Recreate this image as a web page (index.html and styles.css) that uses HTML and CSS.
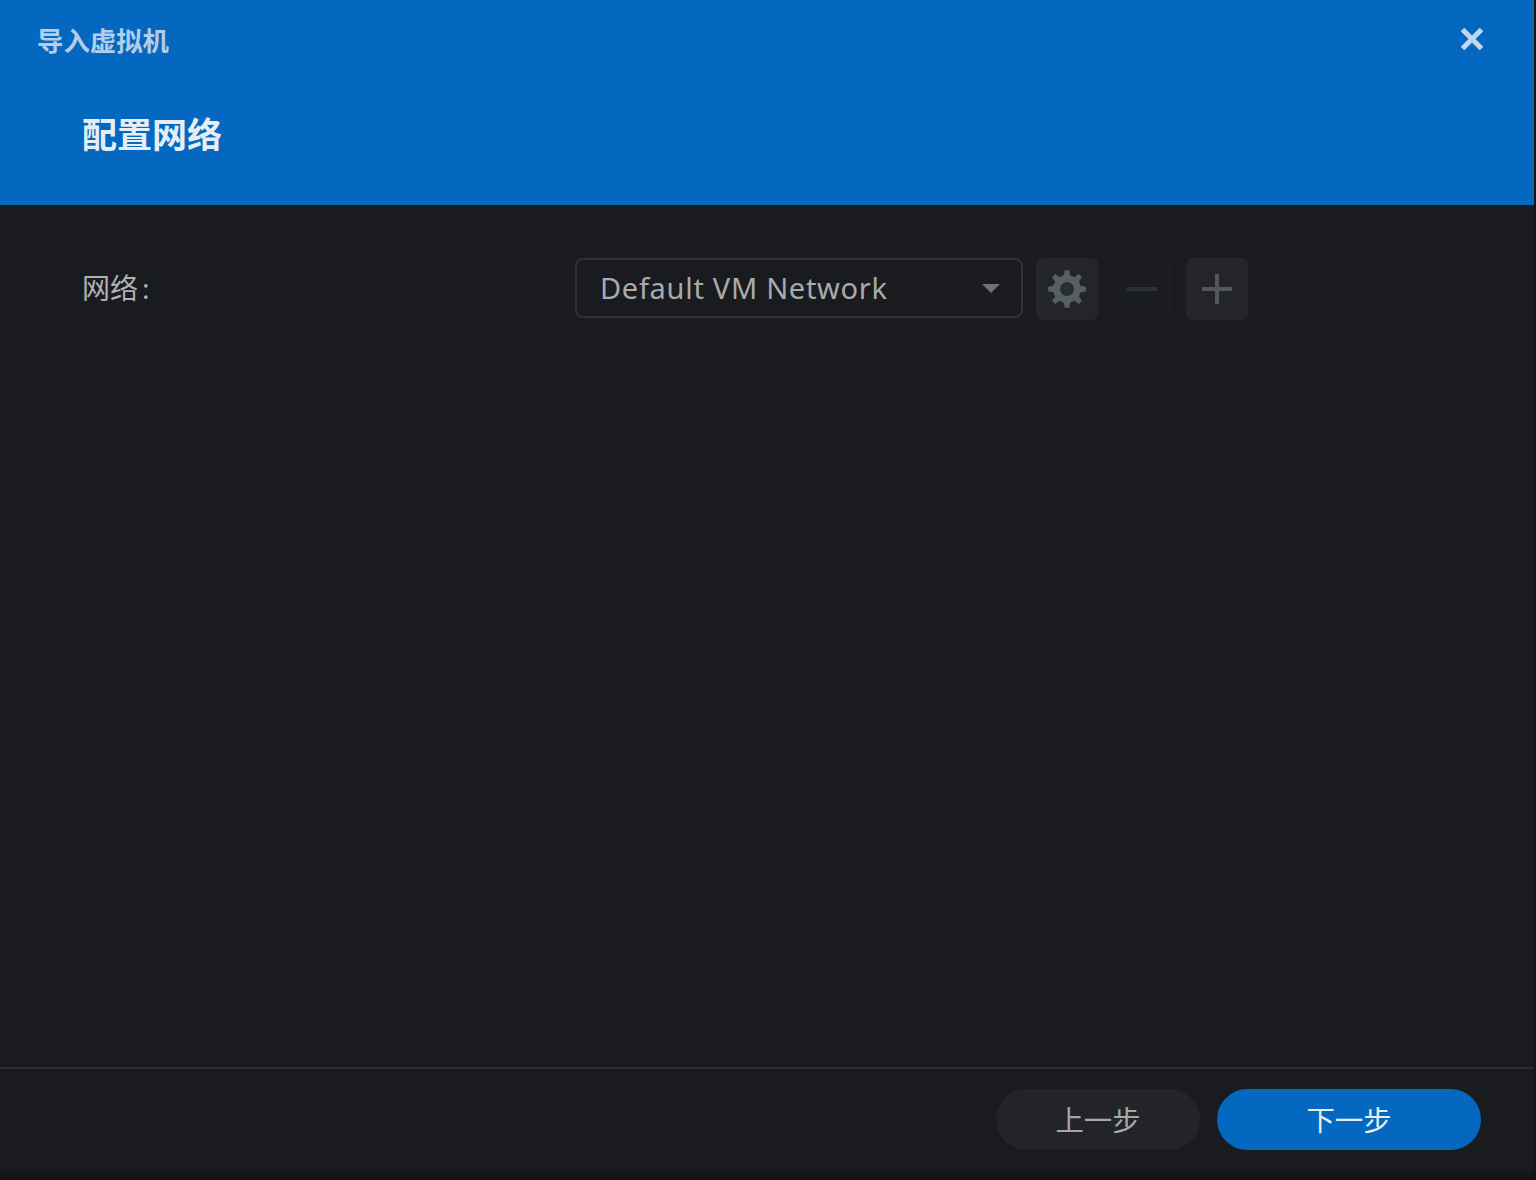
FILE: index.html
```html
<!DOCTYPE html>
<html lang="zh-CN">
<head>
    <meta charset="UTF-8">
    <meta name="viewport" content="width=device-width, initial-scale=1.0">
    <title>导入虚拟机</title>
    <link rel="stylesheet" href="styles.css">
</head>
<body>
    <div class="dialog">
        <!-- Header -->
        <header class="dialog-header">
            <div class="title-row">
                <span class="window-title">导入虚拟机</span>
                <button class="close-btn" type="button" aria-label="关闭">
                    <svg width="24" height="24" viewBox="0 0 24 24">
                        <path d="M2.500 2.500 L21.500 21.500 M21.500 2.500 L2.500 21.500" stroke="#c3d7ec" stroke-width="5" fill="none"/>
                    </svg>
                </button>
            </div>
            <h1 class="step-title">配置网络</h1>
        </header>

        <!-- Form -->
        <main class="dialog-body">
            <div class="form-row">
                <label class="form-label">网络<span class="label-colon">:</span></label>
                <div class="select-box">
                    <span class="select-value">Default VM Network</span>
                    <span class="select-arrow"></span>
                </div>
                <div class="tool-buttons">
                    <button class="tool-btn" type="button" aria-label="设置">
                        <svg width="40" height="40" viewBox="0 0 40 40">
                            <circle class="gear-hole" cx="20" cy="20" r="8"/>
                            <path class="gear" fill-rule="evenodd" d="M16.85 6.36L17.68 1.14H22.32L23.15 6.36L27.42 8.13L31.7 5.03L34.97 8.3L31.87 12.58L33.64 16.85L38.86 17.68V22.32L33.64 23.15L31.87 27.42L34.97 31.7L31.7 34.97L27.42 31.87L23.15 33.64L22.32 38.86H17.68L16.85 33.64L12.58 31.87L8.3 34.97L5.03 31.7L8.13 27.42L6.36 23.15L1.14 22.32V17.68L6.36 16.85L8.13 12.58L5.03 8.3L8.3 5.03L12.58 8.13Z M20 13a7 7 0 1 0 0 14a7 7 0 1 0 0-14z"/>
                        </svg>
                    </button>
                    <button class="tool-btn is-disabled" type="button" aria-label="删除">
                        <svg width="32" height="32" viewBox="0 0 32 32">
                            <path class="dim-line" d="M1 16H31"/>
                        </svg>
                    </button>
                    <button class="tool-btn" type="button" aria-label="添加">
                        <svg width="32" height="32" viewBox="0 0 32 32">
                            <path class="plus-line" d="M1 16H31M16 1V31"/>
                        </svg>
                    </button>
                </div>
            </div>
        </main>

        <!-- Footer -->
        <footer class="dialog-footer">
            <button class="btn btn-prev" type="button">上一步</button>
            <button class="btn btn-next" type="button">下一步</button>
        </footer>
    </div>
</body>
</html>
```

FILE: styles.css
```css
/* General Styles */
html, body {
    height: 100%;
}

body {
    margin: 0;
    padding: 0;
    background-color: #141518;
    font-family: "Noto Sans", "Noto Sans CJK SC", sans-serif;
}

button {
    font-family: inherit;
    border: none;
    padding: 0;
    cursor: pointer;
}

.dialog {
    height: 1172px;
    margin-right: 2px;
    display: flex;
    flex-direction: column;
    background-color: #1a1b1f;
}

/* Header */
.dialog-header {
    height: 205px;
    flex-shrink: 0;
    box-sizing: border-box;
    padding: 22px 50px 0 37px;
    background-color: #0568c0;
}

.title-row {
    display: flex;
    align-items: flex-start;
    justify-content: space-between;
}

.window-title {
    font-size: 26.4px;
    line-height: 38px;
    font-weight: 700;
    color: #b4cde6;
}

.close-btn {
    display: flex;
    margin-top: 5px;
    background: none;
}

.step-title {
    margin: 50px 0 0 45px;
    font-size: 35px;
    line-height: 50px;
    font-weight: 700;
    color: #e6edf5;
}

/* Form */
.dialog-body {
    flex: 1;
    padding: 53px 82px 0;
}

.form-row {
    display: flex;
    align-items: flex-start;
}

.form-label {
    width: 493px;
    flex-shrink: 0;
    font-size: 28px;
    line-height: 60px;
    color: #b0b1b3;
}

.label-colon {
    margin-left: 4px;
}

.select-box {
    width: 448px;
    height: 60px;
    box-sizing: border-box;
    display: flex;
    align-items: center;
    justify-content: space-between;
    padding: 0 21px 2px 23px;
    border: 2px solid #323339;
    border-radius: 8px;
}

.select-value {
    font-size: 29px;
    letter-spacing: 0.7px;
    color: #a9aaac;
}

.select-arrow {
    width: 0;
    height: 0;
    margin-top: 2px;
    border-left: 9px solid transparent;
    border-right: 9px solid transparent;
    border-top: 9px solid #6f7073;
}

.tool-buttons {
    display: flex;
    gap: 14px;
    margin-left: 13px;
}

.tool-btn {
    width: 62px;
    height: 62px;
    display: flex;
    align-items: center;
    justify-content: center;
    border-radius: 6px;
    background-color: #23252a;
}

.tool-btn.is-disabled {
    width: 60px;
    background-color: #1b1d21;
}

.gear {
    fill: #585f61;
}

.gear-hole {
    fill: #263033;
}

.dim-line {
    stroke: #2b3335;
    stroke-width: 4;
    fill: none;
}

.plus-line {
    stroke: #53575a;
    stroke-width: 4;
    fill: none;
}

/* Footer */
.dialog-footer {
    height: 105px;
    flex-shrink: 0;
    box-sizing: border-box;
    display: flex;
    justify-content: flex-end;
    gap: 17px;
    padding: 20px 53px 0 0;
    border-top: 2px solid #2c2d31;
}

.btn {
    height: 61px;
    padding-bottom: 2px;
    border-radius: 31px;
    font-size: 28.4px;
}

.btn-prev {
    width: 204px;
    background-color: #232428;
    color: #a6a7a9;
}

.btn-next {
    width: 264px;
    background-color: #0568c0;
    color: #e4ecf4;
}
```
